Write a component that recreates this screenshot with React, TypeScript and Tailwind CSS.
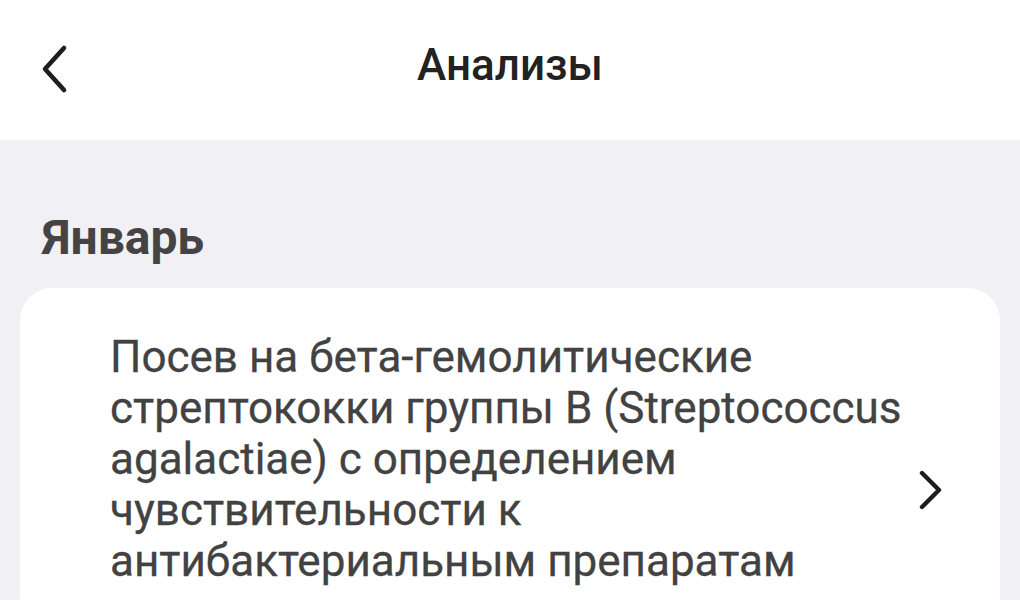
export default function App() {
  return (
    <div className="min-h-screen bg-[#f0f0f5] font-['Roboto',_'Noto_Sans',_sans-serif]">
      {/* Header */}
      <div className="relative h-[140px] bg-white flex items-center justify-center">
        <button className="absolute left-[36px] top-[40px] p-1">
          <svg width="30" height="50" viewBox="0 0 30 50" fill="none">
            <path d="M24 4 L5 25 L24 46" stroke="#1e1e1e" strokeWidth="4.6" strokeLinecap="round" strokeLinejoin="round" />
          </svg>
        </button>
        <h1 className="text-[44px] leading-[52px] font-medium text-[#222] -mt-[10px]">Анализы</h1>
      </div>

      {/* Content */}
      <div className="px-5">
        <h2 className="pl-[22px] pt-[70px] text-[48px] leading-[56px] font-bold text-[#444]">Январь</h2>

        <div className="mt-[22px] bg-white rounded-[32px] pl-[90px] pr-[56px] pt-[44px] pb-[40px] flex items-start">
          <div className="flex-1 pr-[10px] text-[44px] leading-[51px] text-[#424242] [-webkit-text-stroke:0.3px_#424242]">
            Посев на бета-гемолитические стрептококки группы B (Streptococcus agalactiae) с определением чувствительности к антибактериальным препаратам
          </div>
          <svg className="mt-[138px] shrink-0" width="26" height="40" viewBox="0 0 26 40" fill="none">
            <path d="M4 3 L21 20 L4 37" stroke="#1e1e1e" strokeWidth="4.4" strokeLinecap="round" strokeLinejoin="round" />
          </svg>
        </div>
      </div>
    </div>
  );
}
